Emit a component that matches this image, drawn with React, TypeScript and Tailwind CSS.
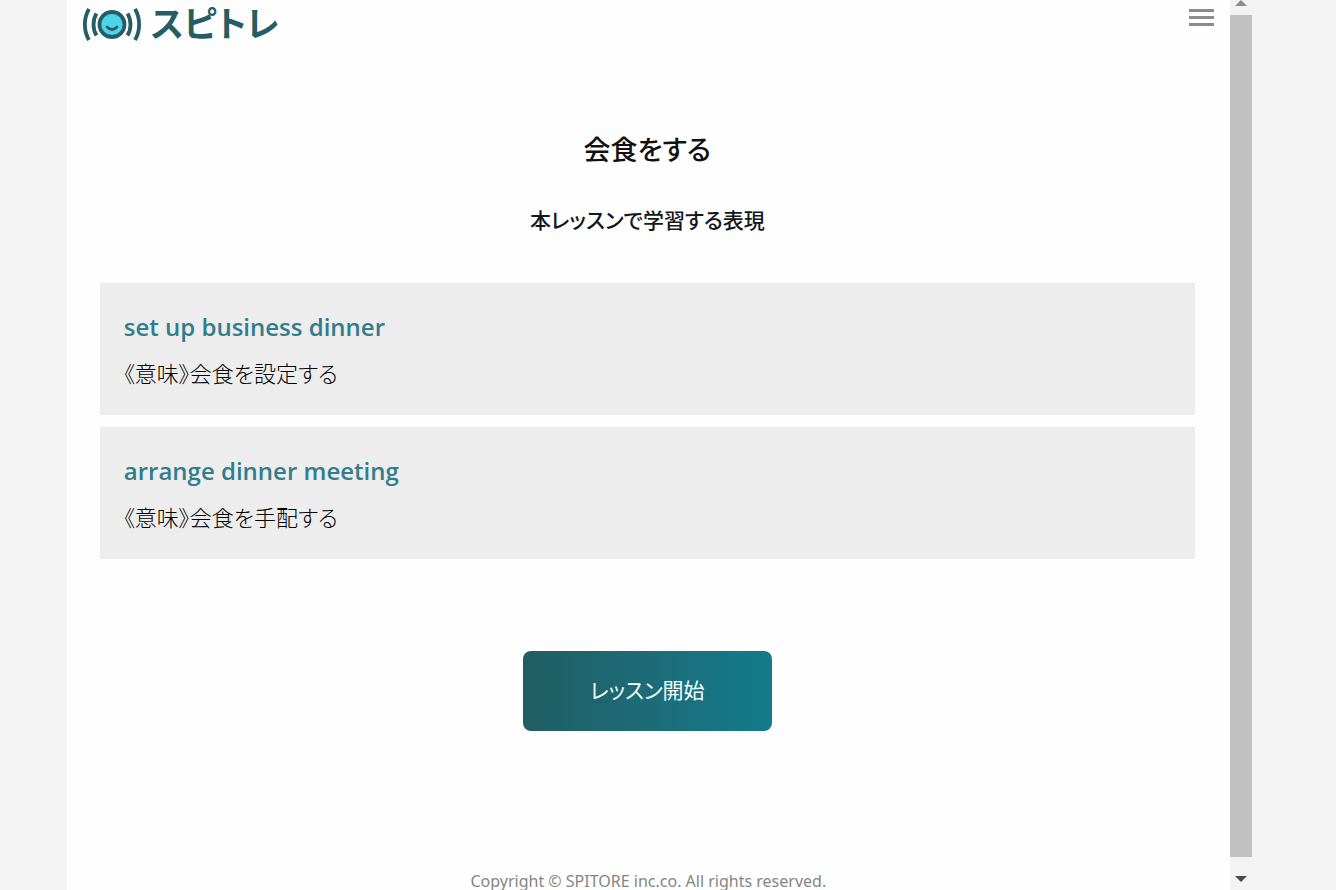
type Expression = { phrase: string; meaning: string };

const expressions: Expression[] = [
  { phrase: "set up business dinner", meaning: "《意味》会食を設定する" },
  { phrase: "arrange dinner meeting", meaning: "《意味》会食を手配する" },
];

function LogoMark() {
  return (
    <svg viewBox="0 0 60 36" className="h-9 w-15" fill="none" aria-hidden="true">
      <g stroke="#245d63" strokeWidth="3.8">
        <path d="M6 3C0.500 12 0.500 25 6 34" />
        <path d="M13.500 7.500C9.500 14 9.500 23 13.500 29.500" />
        <path d="M44.500 7.500C48.500 14 48.500 23 44.500 29.500" />
        <path d="M52 3C57.500 12 57.500 25 52 34" />
        <circle cx="29" cy="18.500" r="12.500" fill="#4dd3ea" strokeWidth="3.8" />
        <path d="M24 21Q29 26 34 21" strokeWidth="2.800" strokeLinecap="round" />
      </g>
    </svg>
  );
}

function Header() {
  return (
    <header className="flex h-12 items-start justify-between px-4">
      <a href="#" className="flex h-12 items-center gap-2 text-[35px] font-bold text-[#245d63]">
        <LogoMark />
        <span>スピトレ</span>
      </a>
      <button type="button" aria-label="メニュー" className="mt-2 flex h-[19px] w-[25px] flex-col justify-center gap-1">
        <span className="h-[3px] w-full bg-[#8c8c8c]" />
        <span className="h-[3px] w-full bg-[#8c8c8c]" />
        <span className="h-[3px] w-full bg-[#8c8c8c]" />
      </button>
    </header>
  );
}

function ExpressionCard({ phrase, meaning }: Expression) {
  return (
    <li className="bg-[#ededed] px-6 pt-[22px] pb-5">
      <h3 className="font-['Open_Sans',sans-serif] text-2xl leading-[44px] font-semibold text-[#317d8c]">{phrase}</h3>
      <p className="mt-0.5 text-[22px] leading-[44px] font-light text-black">{meaning}</p>
    </li>
  );
}

function ScrollRail() {
  return (
    <div className="flex w-[22px] shrink-0 flex-col items-center bg-[#f3f3f3]" aria-hidden="true">
      <svg viewBox="0 0 22 15" className="h-[15px] w-full">
        <path d="M5 6L11 0L17 6Z" fill="#8c8c8c" />
      </svg>
      <div className="w-full flex-1 bg-[#c1c1c1]" />
      <svg viewBox="0 0 22 33" className="h-[33px] w-full">
        <path d="M5 19H17L11 25Z" fill="#4a4a4a" />
      </svg>
    </div>
  );
}

export default function App() {
  return (
    <div className="flex h-screen overflow-hidden bg-[#f3f3f3] pr-[6.3%] pl-[5%] font-['Noto_Sans','Noto_Sans_CJK_JP',sans-serif] [font-feature-settings:'palt']">
      <div className="min-w-0 flex-1 bg-[#fefefe]">
        <Header />
        <main className="flex flex-col items-center pt-20 pr-[35px] pl-[33px]">
          <h1 className="text-[27px] leading-[44px] font-medium text-[#111]">会食をする</h1>
          <h2 className="mt-[26px] text-[21px] leading-[44px] font-medium text-[#111820]">本レッスンで学習する表現</h2>
          <ul className="mt-[41px] flex w-full flex-col gap-3">
            {expressions.map((item) => (
              <ExpressionCard key={item.phrase} {...item} />
            ))}
          </ul>
          <button
            type="button"
            className="mt-23 h-20 w-[249px] rounded-lg bg-linear-to-r from-[#215d63] to-[#127b8c] text-[21px] text-[#f4ffff]"
          >
            レッスン開始
          </button>
        </main>
        <footer className="mt-[138px] text-center text-base leading-6 text-[#858585]">
          Copyright © SPITORE inc.co. All rights reserved.
        </footer>
      </div>
      <ScrollRail />
    </div>
  );
}
